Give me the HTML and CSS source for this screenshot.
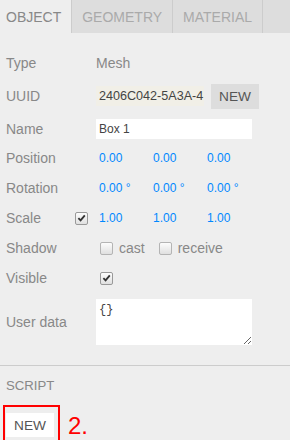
FILE: index.html
```html
<!DOCTYPE html>
<html>
<head>
<meta charset="utf-8">
<link rel="stylesheet" href="styles.css">
</head>
<body>
<div class="tabs">
  <span class="tab tab-first sel">OBJECT</span><span class="tab">GEOMETRY</span><span class="tab">MATERIAL</span>
</div>
<div class="panel props">
  <div class="row"><span class="lbl">Type</span><span class="val">Mesh</span></div>
  <div class="row r-uuid"><span class="lbl">UUID</span><span class="uuid">2406C042-5A3A-4</span><button class="btn btn-gray">NEW</button></div>
  <div class="row r-name"><span class="lbl">Name</span><input class="text" type="text" value="Box 1"></div>
  <div class="row"><span class="lbl">Position</span><span class="num">0.00</span><span class="num">0.00</span><span class="num">0.00</span></div>
  <div class="row"><span class="lbl">Rotation</span><span class="num">0.00 °</span><span class="num">0.00 °</span><span class="num">0.00 °</span></div>
  <div class="row"><span class="lbl lbl-split">Scale<span class="cb on cb-scale"><svg viewBox="0 0 12 12" width="12" height="12"><path d="M2.6 6.2 L5 8.6 L9.6 3.2" fill="none" stroke="#333" stroke-width="2"/></svg></span></span><span class="num">1.00</span><span class="num">1.00</span><span class="num">1.00</span></div>
  <div class="row"><span class="lbl">Shadow</span><span class="cb"></span><span class="opt opt-gap">cast</span><span class="cb"></span><span class="opt">receive</span></div>
  <div class="row r-visible"><span class="lbl">Visible</span><span class="cb on"><svg viewBox="0 0 12 12" width="12" height="12"><path d="M2.6 6.2 L5 8.6 L9.6 3.2" fill="none" stroke="#333" stroke-width="2"/></svg></span></div>
  <div class="row r-data"><span class="lbl">User data</span><textarea class="data">{}</textarea></div>
</div>
<div class="panel script">
  <div class="row"><span class="lbl lbl-title">SCRIPT</span></div>
  <div class="script-row">
    <div class="mark"><button class="btn btn-white">NEW</button></div>
    <span class="step">2.</span>
  </div>
</div>
</body>
</html>
```

FILE: styles.css
```css
html, body {
  margin: 0;
  padding: 0;
  background: #eee;
}
body {
  width: 290px;
  height: 440px;
  overflow: hidden;
  font-family: "Liberation Sans", Arial, sans-serif;
  font-size: 14px;
  color: #888;
}
.tabs {
  display: flex;
  height: 33px;
  background: #ddd;
}
.tab {
  display: flex;
  align-items: center;
  padding: 0 10px;
  color: #aaa;
  border-right: 1px solid #ccc;
  font-size: 14px;
}
.tab-first {
  padding-left: 6px;
}
.tab.sel {
  background: #eee;
  color: #888;
}
.panel {
  padding: 0 0 0 6px;
}
.props {
  padding-top: 20px;
  padding-bottom: 20px;
}
.row {
  display: flex;
  align-items: center;
  height: 20px;
  margin-bottom: 10px;
}
.row:last-child {
  margin-bottom: 0;
}
.lbl {
  width: 90px;
  flex: none;
}
.lbl-split {
  display: flex;
  justify-content: space-between;
  align-items: center;
}
.val {
  color: #888;
}
.r-uuid {
  height: 26px;
}
.uuid {
  width: 105px;
  height: 20px;
  line-height: 20px;
  padding-left: 3px;
  background: #f1efe7;
  color: #444;
  font-size: 12.6px;
  white-space: nowrap;
  overflow: hidden;
}
.btn {
  font-family: "Liberation Sans", Arial, sans-serif;
  font-size: 13.7px;
  color: #555;
  border: none;
  padding: 0;
  width: 48px;
  margin: 0;
}
.btn-gray {
  background: #ddd;
  height: 25px;
  margin-left: 7px;
}
.btn-white {
  background: #fff;
  height: 24px;
}
.r-name {
  margin-bottom: 9px;
}
.text {
  width: 156px;
  height: 20px;
  box-sizing: border-box;
  border: none;
  padding: 0 3px;
  margin: 0;
  background: #fff;
  color: #444;
  font-family: "Liberation Sans", Arial, sans-serif;
  font-size: 12px;
  outline: none;
}
.num {
  width: 51px;
  padding-left: 3px;
  color: #08f;
  font-size: 12px;
}
.cb {
  display: inline-flex;
  align-items: center;
  justify-content: center;
  width: 11px;
  height: 11px;
  border: 1px solid #b4b4b4;
  border-radius: 2px;
  background: linear-gradient(#fcfcfc, #e0e0e0);
  margin: 0 6px 0 4px;
  flex: none;
}
.cb.on {
  border-color: #999;
}
.cb svg {
  display: block;
}
.cb-scale {
  margin: 0 8px 0 0;
}
.opt {
  color: #888;
}
.opt-gap {
  margin-right: 10px;
}
.r-visible {
  margin-bottom: 11px;
}
.r-data {
  height: 46px;
}
.data {
  width: 156px;
  height: 46px;
  box-sizing: border-box;
  border: none;
  margin: 0;
  padding: 4px 3px;
  background: #fff;
  font-family: "Liberation Mono", monospace;
  font-size: 12px;
  color: #444;
  outline: none;
}
.script {
  border-top: 1px solid #ccc;
  padding-top: 9px;
  margin-left: 0;
}
.lbl-title {
  font-size: 13.2px;
}
.script-row {
  display: flex;
  align-items: center;
  margin-top: 6px;
  margin-left: -3px;
}
.mark {
  border: 2px solid #f00;
  padding: 6px 4px 3px 1px;
  display: flex;
}
.step {
  color: #f00;
  font-size: 24px;
  margin-left: 8px;
  margin-top: 4px;
}
```
